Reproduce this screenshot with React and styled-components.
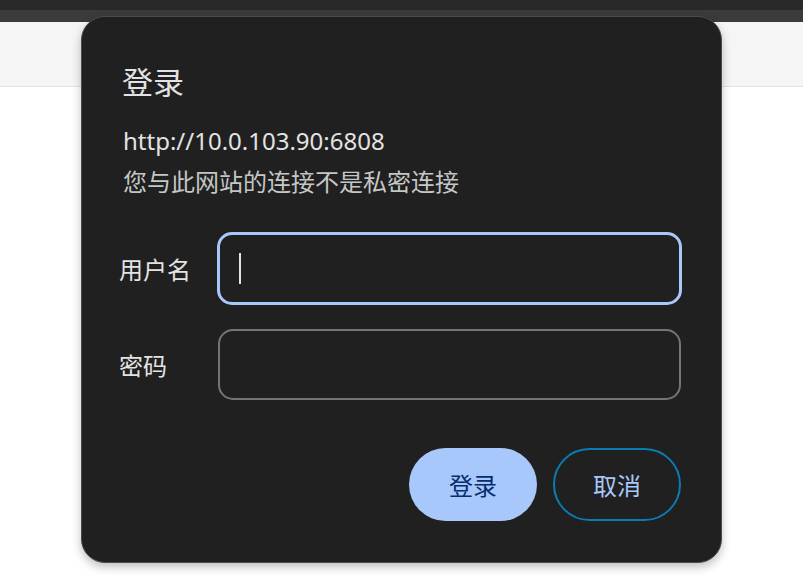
import React from 'react';
import styled, { createGlobalStyle } from 'styled-components';

const GlobalStyle = createGlobalStyle`
  html, body {
    margin: 0;
    padding: 0;
    background: #ffffff;
  }
  body {
    font-family: "Noto Sans", "Noto Sans CJK SC", sans-serif;
  }
`;

const Page = styled.div`
  position: relative;
  width: 803px;
  height: 583px;
  overflow: hidden;
  background: #ffffff;
`;

const TitleBar = styled.div`
  height: 10px;
  background: #292929;
`;

const TabStrip = styled.div`
  height: 12px;
  background: #3b3b3b;
`;

const Toolbar = styled.div`
  height: 64px;
  background: #f5f5f5;
  border-bottom: 1px solid #e2e2e2;
`;

// the auth prompt floats over the browser page
const Dialog = styled.div`
  position: absolute;
  left: 81px;
  top: 16px;
  width: 641px;
  box-sizing: border-box;
  padding: 45px 39px 41px 39px;
  background: #202020;
  border-radius: 24px;
  border: 1px solid #514a40;
  box-shadow: 0 4px 10px rgba(0, 0, 0, 0.25);
  display: flex;
  flex-direction: column;
  color: #e3e3e3;
`;

const Title = styled.h1`
  margin: 0;
  padding-left: 1px;
  font-size: 31px;
  line-height: 40px;
  font-weight: 400;
  color: #e3e3e3;
`;

const InfoLine = styled.div`
  font-size: 24px;
  line-height: 40px;
  padding-left: 2px;
  margin-top: ${p => p.$gap || 0}px;
  color: ${p => (p.$muted ? '#c4c7c5' : '#e3e3e3')};
`;

const Form = styled.div`
  margin-top: 30px;
  display: flex;
  flex-direction: column;
  gap: 24px;
`;

const FieldRow = styled.div`
  display: grid;
  grid-template-columns: 96px 1fr;
  align-items: center;
`;

const Label = styled.div`
  font-size: 24px;
  margin-left: -2px;
  color: #e3e3e3;
`;

const Field = styled.div`
  height: ${p => (p.$focused ? 73 : 71)}px;
  margin-left: ${p => (p.$focused ? 0 : 1)}px;
  margin-right: ${p => (p.$focused ? 0 : 1)}px;
  box-sizing: border-box;
  border: ${p => (p.$focused ? '3px solid #a8c7fa' : '2px solid #757575')};
  border-radius: 15px;
  display: flex;
  align-items: center;
  padding-left: 19px;
`;

const Caret = styled.span`
  width: 2px;
  height: 31px;
  background: #e3e3e3;
`;

const Actions = styled.div`
  margin-top: 48px;
  display: flex;
  justify-content: flex-end;
  gap: 16px;
  padding-right: 1px;
`;

const Button = styled.button`
  width: 128px;
  height: 73px;
  box-sizing: border-box;
  border-radius: 37px;
  font-family: inherit;
  font-size: 24px;
  cursor: pointer;
  background: ${p => (p.$primary ? '#a8c7fa' : 'transparent')};
  color: ${p => (p.$primary ? '#062e6f' : '#a8c7fa')};
  border: ${p => (p.$primary ? 'none' : '2px solid #0b7bb3')};
  padding: 0;
`;

export default function App() {
  return (
    <Page>
      <GlobalStyle />
      <TitleBar />
      <TabStrip />
      <Toolbar />
      <Dialog>
        <Title>登录</Title>
        <InfoLine $gap={19}>http://10.0.103.90:6808</InfoLine>
        <InfoLine $gap={1} $muted>您与此网站的连接不是私密连接</InfoLine>
        <Form>
          <FieldRow>
            <Label>用户名</Label>
            <Field $focused>
              <Caret />
            </Field>
          </FieldRow>
          <FieldRow>
            <Label>密码</Label>
            <Field />
          </FieldRow>
        </Form>
        <Actions>
          <Button $primary>登录</Button>
          <Button>取消</Button>
        </Actions>
      </Dialog>
    </Page>
  );
}
